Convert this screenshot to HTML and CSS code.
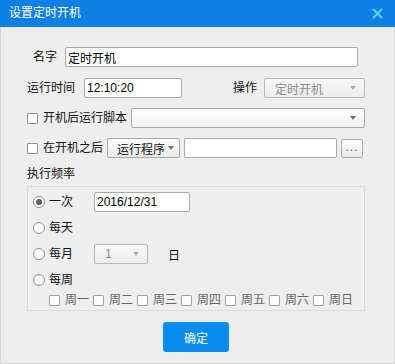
FILE: index.html
```html
<!DOCTYPE html>
<html lang="zh">
<head>
    <meta charset="UTF-8">
    <title>设置定时开机</title>
    <link rel="stylesheet" href="styles.css">
</head>
<body>
    <div class="dialog">
        <div class="titlebar">
            <span class="title">设置定时开机</span>
            <svg class="close" width="11" height="11" viewBox="0 0 11 11">
                <path d="M1 1L10 10M10 1L1 10" stroke="#5ccff2" stroke-width="2"/>
            </svg>
        </div>
        <div class="panel">
            <div class="row row-first">
                <span class="label name-label">名字</span>
                <input class="field name-field" value="定时开机">
            </div>
            <div class="row">
                <span class="label time-label">运行时间</span>
                <input class="field time-field" value="12:10:20">
                <span class="label op-label">操作</span>
                <div class="select op-select disabled"><span>定时开机</span><i class="arrow"></i></div>
            </div>
            <div class="row">
                <span class="check"></span>
                <span class="label">开机后运行脚本</span>
                <div class="select script-select"><span></span><i class="arrow"></i></div>
            </div>
            <div class="row row-last">
                <span class="check"></span>
                <span class="label">在开机之后</span>
                <div class="btn drop-btn">运行程序<i class="arrow"></i></div>
                <input class="field path-field" value="">
                <div class="btn dots-btn">...</div>
            </div>

            <div class="section-title">执行频率</div>
            <div class="group">
                <div class="opt">
                    <span class="radio checked"></span>
                    <span class="opt-label">一次</span>
                    <input class="field date-field" value="2016/12/31">
                </div>
                <div class="opt">
                    <span class="radio"></span>
                    <span class="opt-label">每天</span>
                </div>
                <div class="opt">
                    <span class="radio"></span>
                    <span class="opt-label">每月</span>
                    <div class="select month-select disabled"><span>1</span><i class="arrow"></i></div>
                    <span class="day-label">日</span>
                </div>
                <div class="opt opt-last">
                    <span class="radio"></span>
                    <span class="opt-label">每周</span>
                </div>
                <div class="weekdays">
                    <span class="check"></span><span class="wd">周一</span>
                    <span class="check"></span><span class="wd">周二</span>
                    <span class="check"></span><span class="wd">周三</span>
                    <span class="check"></span><span class="wd">周四</span>
                    <span class="check"></span><span class="wd">周五</span>
                    <span class="check"></span><span class="wd">周六</span>
                    <span class="check"></span><span class="wd">周日</span>
                </div>
            </div>

            <div class="actions">
                <button class="ok-btn">确定</button>
            </div>
        </div>
    </div>
</body>
</html>
```

FILE: styles.css
```css
body {
    margin: 0;
    background: #eeeeee;
    font-family: "Liberation Sans", "Noto Sans CJK SC", sans-serif;
    font-size: 12px;
    color: #111;
}

.dialog {
    width: 395px;
    height: 364px;
    background: #eeeeee;
}

/*
 * title bar
 */
.titlebar {
    height: 27px;
    background: #0e7fe3;
    color: #fff;
    display: flex;
    align-items: center;
    justify-content: space-between;
    padding: 0 12px 0 9px;
}
.title {
    line-height: 27px;
}
.close {
    display: block;
}

/*
 * form
 */
.panel {
    height: 337px;
    box-sizing: border-box;
    padding: 20px 29px 0 26px;
    border: 1px solid #d6d6d6;
    border-top: none;
}
.row {
    display: flex;
    align-items: center;
    height: 20px;
    margin-bottom: 10px;
}
.row-first {
    margin-bottom: 11px;
}
.row-last {
    margin-bottom: 6px;
}
.label {
    white-space: nowrap;
    line-height: 20px;
}
.name-label {
    margin-left: 6px;
    margin-right: 8px;
}
.time-label {
    margin-right: 9px;
}
.op-label {
    margin-left: 51px;
    margin-right: 7px;
}

.field {
    box-sizing: border-box;
    height: 20px;
    border: 1px solid #a9a9a9;
    border-radius: 2px;
    background: #fff;
    padding: 0 2px;
    margin: 0;
    font: inherit;
    color: #000;
    outline: none;
}
.name-field { width: 293px; }
.time-field { width: 98px; }
.path-field { width: 153px; margin-left: 4px; }
.date-field { width: 96px; }

.select {
    box-sizing: border-box;
    height: 20px;
    border: 1px solid #a9a9a9;
    border-radius: 2px;
    background: linear-gradient(#ffffff, #f1f1f1);
    display: flex;
    align-items: center;
    justify-content: space-between;
    padding: 0 8px 0 10px;
}
.select.disabled {
    color: #8c8c8c;
    background: linear-gradient(#f7f7f7, #ececec);
    border-color: #b8b8b8;
}
.op-select { width: 101px; }
.script-select { width: 234px; margin-left: 4px; }
.month-select { width: 54px; padding-right: 8px; }

.arrow {
    width: 0;
    height: 0;
    border-left: 3px solid transparent;
    border-right: 3px solid transparent;
    border-top: 4px solid #6f6f6f;
}
.disabled .arrow {
    border-top-color: #a8a8a8;
}

.btn {
    box-sizing: border-box;
    height: 20px;
    border: 1px solid #a9a9a9;
    border-radius: 2px;
    background: linear-gradient(#fdfdfd, #e9e9e9);
    display: flex;
    align-items: center;
}
.drop-btn {
    width: 73px;
    margin-left: 4px;
    padding-left: 9px;
    gap: 3px;
}
.drop-btn .arrow {
    border-top-color: #777;
}
.dots-btn {
    width: 22px;
    height: 19px;
    margin-left: 4px;
    justify-content: center;
    color: #555;
    letter-spacing: 1px;
    padding-bottom: 2px;
}

.check {
    width: 11px;
    height: 11px;
    box-sizing: border-box;
    border: 1px solid #8e8e8e;
    border-radius: 1px;
    background: #fff;
    margin-right: 5px;
    flex-shrink: 0;
}

/*
 * frequency
 */
.section-title {
    height: 20px;
    line-height: 20px;
}
.group {
    margin-top: 2px;
    border: 1px solid #dadada;
    padding: 5px 0 4px 5px;
}
.opt {
    display: flex;
    align-items: center;
    height: 20px;
    margin-bottom: 6px;
}
.opt-last {
    margin-bottom: 4px;
}
.radio {
    width: 12px;
    height: 12px;
    box-sizing: border-box;
    border: 1px solid #8e8e8e;
    border-radius: 50%;
    background: #fff;
    margin-right: 4px;
    display: flex;
    align-items: center;
    justify-content: center;
}
.radio.checked::after {
    content: "";
    width: 6px;
    height: 6px;
    border-radius: 50%;
    background: radial-gradient(circle at 40% 40%, #777, #333);
}
.opt-label {
    width: 45px;
    line-height: 20px;
}
.day-label {
    margin-left: 20px;
}

.weekdays {
    display: flex;
    align-items: center;
    height: 12px;
    margin-left: 16px;
    color: #666;
}
.weekdays .check {
    border-color: #a0a0a0;
}
.wd {
    width: 24px;
    margin-right: 4px;
    line-height: 12px;
}

.actions {
    display: flex;
    justify-content: center;
    margin-top: 11px;
}
.ok-btn {
    width: 66px;
    height: 30px;
    border: none;
    border-radius: 3px;
    background: #098cf0;
    color: #fff;
    font: inherit;
    font-size: 12px;
    padding: 0;
}
```
